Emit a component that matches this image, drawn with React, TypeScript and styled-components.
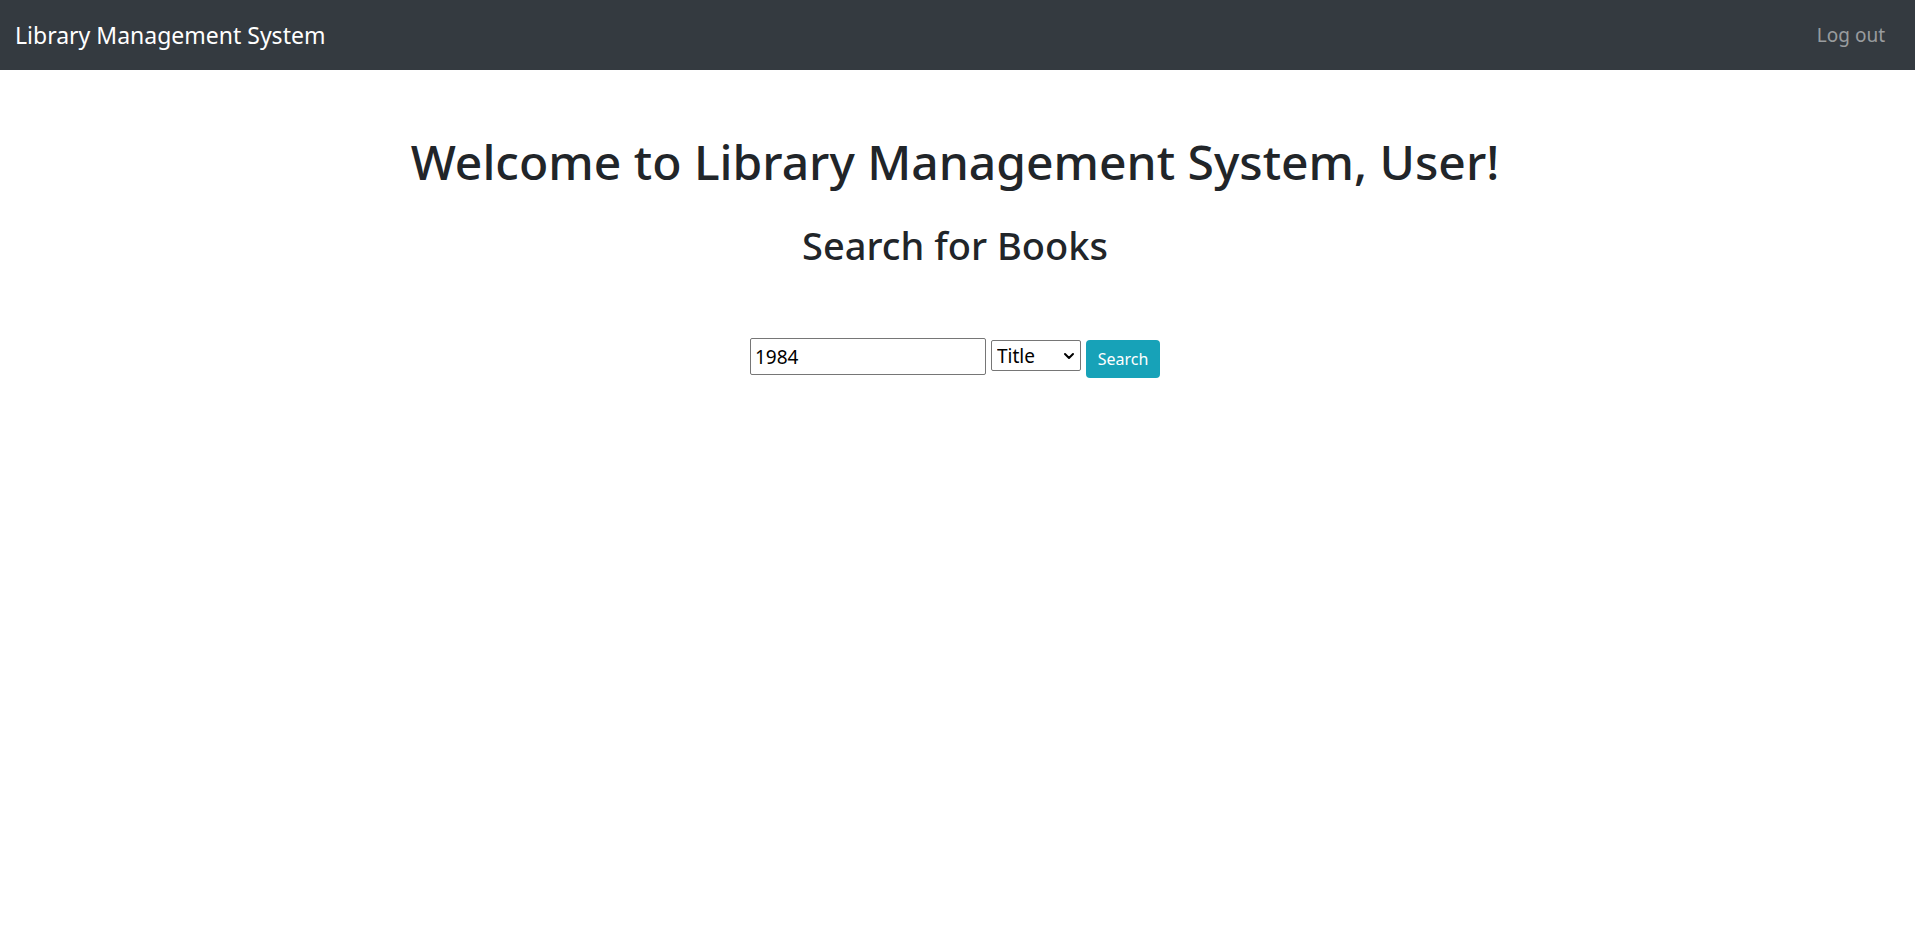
import React, { useState } from "react";
import styled, { createGlobalStyle } from "styled-components";
import { ChevronDown } from "lucide-react";

const GlobalStyle = createGlobalStyle`
  *, *::before, *::after { box-sizing: border-box; }
  body {
    margin: 0;
    background: #fff;
    color: #212529;
    font-family: "Segoe UI", "Noto Sans", sans-serif;
    font-size: 19px;
    line-height: 30px;
  }
`;

const Navbar = styled.nav`
  display: flex;
  align-items: center;
  justify-content: space-between;
  padding: 10px 30px 10px 15px;
  background: #343a40;
`;

const Brand = styled.a`
  color: #fff;
  font-size: 23px;
  line-height: 50px;
  text-decoration: none;
`;

const NavLink = styled.a`
  color: rgba(255, 255, 255, 0.5);
  text-decoration: none;
`;

const Content = styled.main`
  display: flex;
  flex-direction: column;
  align-items: center;
  padding: 62px 5px 0 0;
  text-align: center;
`;

const Title = styled.h1`
  margin: 0 0 28px;
  font-size: 48px;
  font-weight: 500;
  line-height: 60px;
`;

const Subtitle = styled.h2`
  margin: 0 0 68px;
  font-size: 38px;
  font-weight: 500;
  line-height: 50px;
`;

const SearchForm = styled.form`
  display: flex;
  align-items: flex-start;
  gap: 5px;
`;

const QueryInput = styled.input`
  width: 236px;
  height: 37px;
  padding: 0 4px;
  border: 1px solid #767676;
  border-radius: 2px;
  background: #fff;
  color: #000;
  font: inherit;
`;

const SelectBox = styled.div`
  position: relative;
  margin-top: 2px;

  svg {
    position: absolute;
    top: 8px;
    right: 4px;
    pointer-events: none;
    color: #000;
  }
`;

const FieldSelect = styled.select`
  display: block;
  width: 90px;
  height: 31px;
  padding: 0 5px;
  border: 1px solid #767676;
  border-radius: 2px;
  appearance: none;
  background: #fff;
  color: #000;
  font: inherit;
`;

const SearchButton = styled.button`
  width: 74px;
  height: 38px;
  margin-top: 2px;
  padding: 0;
  border: 0;
  border-radius: 4px;
  background: #17a2b8;
  color: #fff;
  font: inherit;
  font-size: 16px;
  cursor: pointer;
`;

export default function App() {
  const [query, setQuery] = useState("1984");
  const [field, setField] = useState("title");

  return (
    <>
      <GlobalStyle />
      <Navbar>
        <Brand href="#">Library Management System</Brand>
        <NavLink href="#logout">Log out</NavLink>
      </Navbar>
      <Content>
        <Title>Welcome to Library Management System, User!</Title>
        <Subtitle>Search for Books</Subtitle>
        <SearchForm onSubmit={(e) => e.preventDefault()}>
          <QueryInput
            type="text"
            aria-label="Search text"
            value={query}
            onChange={(e) => setQuery(e.target.value)}
          />
          <SelectBox>
            <FieldSelect
              aria-label="Search by"
              value={field}
              onChange={(e) => setField(e.target.value)}
            >
              <option value="title">Title</option>
              <option value="author">Author</option>
            </FieldSelect>
            <ChevronDown size={16} strokeWidth={3} />
          </SelectBox>
          <SearchButton type="submit">Search</SearchButton>
        </SearchForm>
      </Content>
    </>
  );
}
